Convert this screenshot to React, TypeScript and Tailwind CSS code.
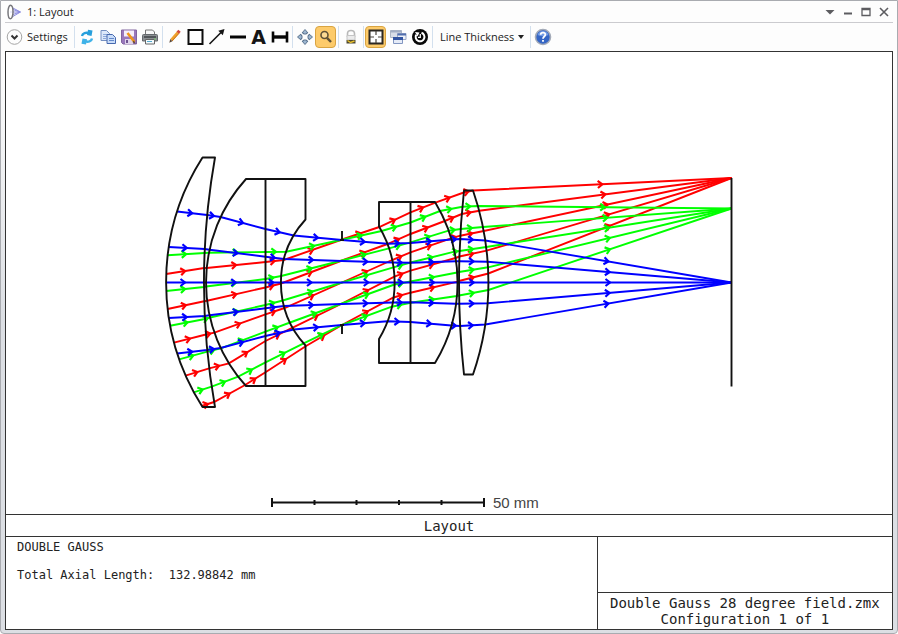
import type { ReactNode } from 'react';

type Surface = { x: number; r: number };

const AXIS = 282.5;

// vertex position and signed radius, r = 0 is a flat surface
const surfaces: Surface[] = [
  { x: 166, r: 232 },
  { x: 204, r: 716 },
  { x: 206, r: 154 },
  { x: 265.5, r: 0 },
  { x: 281, r: 93 },
  { x: 342, r: 0 },
  { x: 394.5, r: -109 },
  { x: 410.5, r: 0 },
  { x: 457.5, r: -155 },
  { x: 459, r: 853 },
  { x: 488.5, r: -282 },
  { x: 731.5, r: 0 },
];

// ray height at each surface
const fields = [
  {
    color: '#ff0000',
    rays: [
      [274, 268, 268, 262, 260, 239.5, 227, 212.3, 202.7, 192.5, 190.5, 178],
      [309, 301.3, 300.7, 287.5, 283.5, 260.5, 244, 234, 221, 214, 210.7, 178],
      [342.7, 334.5, 332.7, 314.3, 308, 282.5, 260, 252.3, 238.3, 235.7, 231, 178],
      [375.7, 368.3, 363.3, 341, 327.7, 303.5, 276.7, 270.7, 258, 256.5, 250.7, 178],
      [406, 402, 385, 372.3, 346, 325, 297.5, 292.7, 281.7, 281, 273.5, 178],
    ],
  },
  {
    color: '#00ff00',
    rays: [
      [255.3, 253, 252.7, 252, 251.7, 239.8, 231, 222.5, 211, 206.7, 206, 208.5],
      [291, 287, 286.5, 279, 276, 260.5, 248.3, 242.3, 230.7, 229, 227, 208.5],
      [325.7, 319, 317.5, 305, 300.5, 282.5, 267.3, 262.5, 251.7, 251, 247, 208.5],
      [359.3, 351.7, 348.3, 331.7, 322.5, 303.5, 284.5, 281.5, 272.5, 272, 267.3, 208.5],
      [392.3, 386.7, 376.7, 362.3, 343.3, 325, 306.7, 302.7, 296, 295.5, 290, 208.5],
    ],
  },
  {
    color: '#0000ff',
    rays: [
      [211.5, 215, 217, 229, 235.5, 240, 243.7, 243, 239.5, 239, 240.5, 282.5],
      [247, 249, 249.7, 256.7, 259, 261, 262.5, 262.7, 261.3, 261.2, 261.7, 282.5],
      [282.5, 282.5, 282.5, 282.5, 282.5, 282.5, 282.5, 282.5, 282.5, 282.5, 282.5, 282.5],
      [318, 316, 315.3, 308.3, 306, 304, 302.5, 302.3, 303.7, 303.8, 303.3, 282.5],
      [353.5, 350, 348, 336, 329.5, 325, 321.3, 322, 325.5, 326, 324.5, 282.5],
    ],
  },
];

const lenses = [
  'M202.5 157.5H215A716 716 0 0 0 215 407H202.5A232 232 0 0 1 202.5 157.5Z',
  'M246 179H305.5V219.5A93 93 0 0 0 305.5 345.5V386H246A154 154 0 0 1 246 179ZM265.5 179V386',
  'M379 202H435A155 155 0 0 1 435 363H379V339A109 109 0 0 0 379 226.5ZM410.5 202V363',
  'M464 190.5H473A282 282 0 0 1 473 374.5H464A853 853 0 0 1 464 190.5Z',
  'M342 231V240M340 240H344M342 334V325M340 325H344',
  'M731.5 178V386.5',
];

function hit(surface: Surface, y: number) {
  if (surface.r === 0) return surface.x;
  const h = y - AXIS;
  const sag = Math.abs(surface.r) - Math.sqrt(surface.r * surface.r - h * h);
  return surface.x + Math.sign(surface.r) * sag;
}

function Ray({ heights, color }: { heights: number[]; color: string }) {
  const points = heights.map((y, i) => [hit(surfaces[i], y), y]);
  let arrows = '';
  for (let i = 1; i < points.length; i++) {
    const dx = points[i][0] - points[i - 1][0];
    const dy = points[i][1] - points[i - 1][1];
    const len = Math.hypot(dx, dy);
    if (len < 5) continue;
    const ux = dx / len;
    const uy = dy / len;
    const mx = (points[i][0] + points[i - 1][0]) / 2;
    const my = (points[i][1] + points[i - 1][1]) / 2;
    const bx = mx - ux * 4.5;
    const by = my - uy * 4.5;
    arrows += `M${bx - uy * 3.5} ${by + ux * 3.5}L${mx} ${my}L${bx + uy * 3.5} ${by - ux * 3.5}`;
  }
  return (
    <g fill="none" stroke={color} strokeWidth="1.9">
      <polyline points={points.map((p) => p.join(',')).join(' ')} />
      <path d={arrows} strokeWidth="2.2" />
    </g>
  );
}

function LensDrawing() {
  return (
    <svg viewBox="6 52 886 462" className="block h-auto w-full" role="img" aria-label="Double Gauss lens layout">
      {fields.map((field) =>
        field.rays.map((heights, i) => <Ray key={field.color + i} heights={heights} color={field.color} />),
      )}
      <g fill="none" stroke="#111" strokeWidth="1.9" strokeLinejoin="round">
        {lenses.map((d) => (
          <path key={d} d={d} />
        ))}
        <path d="M272 502.5H484M272 498V507M484 498V507" strokeWidth="2" />
        <path d="M314.5 500V505M356.5 500V505M399 500V505M441.5 500V505" strokeWidth="2" />
      </g>
      <text x="493" y="508" fill="#444" fontSize="15" fontFamily="Liberation Sans, Arial, sans-serif">
        50 mm
      </text>
    </svg>
  );
}

function Icon({ children }: { children: ReactNode }) {
  return (
    <svg viewBox="0 0 18 18" className="h-[18px] w-[18px] shrink-0" fill="none" aria-hidden="true">
      {children}
    </svg>
  );
}

function ToolButton({ label, active, children }: { label: string; active?: boolean; children: ReactNode }) {
  return (
    <button
      type="button"
      aria-label={label}
      aria-pressed={active}
      className={
        active
          ? 'flex h-[22px] w-[21px] items-center justify-center rounded-sm border border-[#d9a441] bg-[#fdcb6b]'
          : 'flex h-[22px] w-[21px] items-center justify-center'
      }
    >
      {children}
    </button>
  );
}

function Separator() {
  return <div className="mr-px ml-0.5 h-[22px] w-px bg-[#d3e0ee]" />;
}

function WindowButton({ label, children }: { label: string; children: ReactNode }) {
  return (
    <button type="button" aria-label={label} className="flex h-5 w-[18px] items-center justify-center">
      <svg viewBox="0 0 10 10" className="h-2.5 w-2.5" fill="none" stroke="#5c5c60" aria-hidden="true">
        {children}
      </svg>
    </button>
  );
}

function TitleBar() {
  return (
    <header className="flex h-[22px] items-center border-b border-[#cbcbcf]">
      <svg viewBox="0 0 16 16" className="ml-0.5 h-4 w-4" fill="none" aria-hidden="true">
        <path d="M5 3.5L13.500 8L5 13M3 8H13.500M6 5.500L13 8L6 10.500" stroke="#8c8ce0" />
        <ellipse cx="3.500" cy="8" rx="2.500" ry="6.800" fill="#fff" fillOpacity=".7" stroke="#77777c" strokeWidth="1.500" />
      </svg>
      <h1 className="ml-1 flex-1 text-[11px] leading-5 text-[#222]">1: Layout</h1>
      <WindowButton label="Window menu">
        <path d="M0.500 3H9.500L5 7.500Z" fill="#5c5c60" stroke="none" />
      </WindowButton>
      <WindowButton label="Minimize">
        <path d="M1 6.500H9" strokeWidth="2" />
      </WindowButton>
      <WindowButton label="Maximize">
        <path d="M1 1.500H9V8.500H1ZM1 2.500H9" strokeWidth="1.300" />
      </WindowButton>
      <WindowButton label="Close">
        <path d="M1 1L9 9M9 1L1 9" strokeWidth="1.600" />
      </WindowButton>
    </header>
  );
}

function Toolbar() {
  return (
    <div role="toolbar" aria-label="Layout tools" className="flex h-7 items-center text-[11px] text-[#222]">
      <button type="button" className="flex h-[22px] w-[67px] items-center gap-[3px] pl-px">
        <Icon>
          <circle cx="8.500" cy="9" r="7.300" fill="#fdfdfd" stroke="#a5a5a5" />
          <path d="M5.500 7.500L8.500 10.500L11.500 7.500" stroke="#333" strokeWidth="2" />
        </Icon>
        Settings
      </button>
      <Separator />
      <ToolButton label="Refresh">
        <Icon>
          <path d="M4 8C4.500 5 8 4 11 5.200" stroke="#279fdc" strokeWidth="2.400" />
          <path d="M10 1.800L14.500 2.500L13.500 8L9 7Z" fill="#279fdc" />
          <path d="M14 10.500C13.500 13.500 10 14.500 7 13.200" stroke="#3fb2e8" strokeWidth="2.400" />
          <path d="M8 16.500L3.500 15.800L4.500 10.500L9 11.300Z" fill="#3fb2e8" />
        </Icon>
      </ToolButton>
      <ToolButton label="Copy">
        <Icon>
          <path d="M2 2.500H7.500L10.500 5.500V12.500H2Z" fill="#dce8fa" stroke="#7590c2" />
          <path d="M4 6.500H8M4 8.500H8M4 10.500H7" stroke="#8da9da" />
          <path d="M8 6.500H13.500L16.500 9.500V15.500H8Z" fill="#c9dcf8" stroke="#4668ae" />
          <path d="M10 10.500H15M10 12.500H15" stroke="#6489cb" />
        </Icon>
      </ToolButton>
      <ToolButton label="Save">
        <Icon>
          <path d="M1.500 2H16.500V16H3L1.500 14.500Z" fill="#9a78bd" stroke="#81659f" />
          <path d="M4 2.500H14V8.500H4Z" fill="#f5effb" />
          <path d="M5 11H13V16H5Z" fill="#dfd4ea" />
          <path d="M6 12H8V15H6Z" fill="#6f5490" />
          <path d="M7.500 5L14.500 14" stroke="#ef961b" strokeWidth="2.600" />
          <path d="M14 12.500L15.500 16L12.500 14Z" fill="#5b4630" />
        </Icon>
      </ToolButton>
      <ToolButton label="Print">
        <Icon>
          <path d="M4.500 7V2H11.500L13.500 4V7" fill="#f8f8f8" stroke="#777" />
          <path d="M1.500 7.500Q1.500 6.500 2.500 6.500H15.500Q16.500 6.500 16.500 7.500V13H1.500Z" fill="#8c9093" stroke="#666a6e" />
          <path d="M3 9H15" stroke="#3f4347" strokeWidth="1.500" />
          <path d="M4.500 11.500H13.500V16H4.500Z" fill="#f4fafd" stroke="#666" />
          <path d="M6 13.500H11" stroke="#55a9cc" />
          <path d="M13 11H15" stroke="#7bd06e" />
        </Icon>
      </ToolButton>
      <Separator />
      <ToolButton label="Pencil">
        <Icon>
          <path d="M5.500 12L12 4.500" stroke="#f0a12b" strokeWidth="3" />
          <path d="M6 13L13 5.300" stroke="#c7731d" />
          <path d="M11.800 4.800L13.500 2.800" stroke="#d1493e" strokeWidth="3.200" />
          <path d="M4.300 11L6.500 13.300L3.300 14.800Z" fill="#5b4a3a" />
        </Icon>
      </ToolButton>
      <ToolButton label="Rectangle">
        <Icon>
          <path d="M1.500 2H15.500V16H1.500Z" fill="#fff" stroke="#0c0c0c" strokeWidth="2" />
        </Icon>
      </ToolButton>
      <ToolButton label="Arrow">
        <Icon>
          <path d="M1.500 16L13 4.500" stroke="#151515" strokeWidth="1.600" />
          <path d="M16.500 1L14.800 7.300L10.300 2.800Z" fill="#151515" />
        </Icon>
      </ToolButton>
      <ToolButton label="Line">
        <Icon>
          <path d="M1 9H17" stroke="#050505" strokeWidth="3" />
        </Icon>
      </ToolButton>
      <ToolButton label="Text">
        <span className="font-['DejaVu_Sans'] text-[19px] leading-5 font-bold text-[#151515]">A</span>
      </ToolButton>
      <ToolButton label="Dimension">
        <Icon>
          <path d="M2 3.500V14.500M16 3.500V14.500" stroke="#050505" strokeWidth="2.600" />
          <path d="M2 9H16" stroke="#050505" strokeWidth="3.400" />
        </Icon>
      </ToolButton>
      <Separator />
      <ToolButton label="Pan">
        <Icon>
          <path
            d="M9 1.500L12 5H10.500V6H7.500V5H6ZM9 16.500L12 13H10.500V12H7.500V13H6ZM1.500 9L5 6V7.500H6V10.500H5V12ZM16.500 9L13 6V7.500H12V10.500H13V12Z"
            fill="#9db6d0"
            stroke="#5c7590"
          />
        </Icon>
      </ToolButton>
      <ToolButton label="Zoom" active>
        <Icon>
          <circle cx="7.500" cy="7" r="3.500" fill="#fbd993" stroke="#5f5136" strokeWidth="1.600" />
          <path d="M10 9.800L14 14" stroke="#5f5136" strokeWidth="2.400" />
        </Icon>
      </ToolButton>
      <Separator />
      <ToolButton label="Lock window">
        <Icon>
          <path d="M5.500 9V5.500C5.500 1.500 12.500 1.500 12.500 5.500V9" stroke="#b8b8b8" strokeWidth="1.600" />
          <path d="M5 7.500H13V12H5Z" fill="#ebebeb" stroke="#c4c4c4" />
          <path d="M4.500 12H13.500V15.500H4.500Z" fill="#4b4632" />
          <path d="M5.500 12.500L8.500 14.500L12.500 13" stroke="#e6bf2c" strokeWidth="1.500" />
        </Icon>
      </ToolButton>
      <Separator />
      <div className="flex gap-px">
        <ToolButton label="Fit to window" active>
          <Icon>
            <path d="M2.500 2.500H15.500V15.500H2.500Z" fill="#fff" stroke="#2d2822" strokeWidth="2" />
            <path d="M9 3V7M9 11V15M3 9H7M11 9H15" stroke="#4a443c" strokeWidth="1.200" />
          </Icon>
        </ToolButton>
        <ToolButton label="Windows">
          <Icon>
            <path d="M1.500 2.500H12.500V9.500H1.500Z" fill="#d9dee8" stroke="#aeb6c4" />
            <path d="M1.500 3.500H12.500" stroke="#a3aec4" strokeWidth="2" />
            <path d="M8.500 5.500H17V11.500H8.500Z" fill="#eef1f8" stroke="#9ca9c7" />
            <path d="M8.500 6.500H17" stroke="#526fae" strokeWidth="2" />
            <path d="M4.500 9.500H13.500V15.500H4.500Z" fill="#e5ebf7" stroke="#8296c1" />
            <path d="M4 10.500H14" stroke="#3355a2" strokeWidth="3" />
          </Icon>
        </ToolButton>
        <ToolButton label="Reset">
          <Icon>
            <circle cx="9" cy="9" r="8" fill="#080808" />
            <path d="M10.500 4.800A4.400 4.400 0 1 1 5.200 6.800" stroke="#fff" strokeWidth="2" />
            <path d="M4 4L8.500 4.500L6.500 8.500Z" fill="#fff" />
            <path d="M9.300 6V9.300H7" stroke="#fff" strokeWidth="1.200" />
          </Icon>
        </ToolButton>
      </div>
      <Separator />
      <button type="button" className="flex h-[22px] w-[94px] items-center gap-1 pl-1.5 whitespace-nowrap">
        Line Thickness
        <svg viewBox="0 0 6 4" className="h-1 w-1.5 shrink-0" aria-hidden="true">
          <path d="M0 0H6L3 4Z" fill="#222" />
        </svg>
      </button>
      <Separator />
      <ToolButton label="Help">
        <Icon>
          <circle cx="9" cy="9" r="7.500" fill="#3566c5" stroke="#a4abb8" strokeWidth="1.600" />
          <path d="M3.500 7A5.800 5.800 0 0 1 14.500 7Q9 9.500 3.500 7Z" fill="#729be4" />
          <path d="M6.600 6.800C6.800 3.800 11.500 4 11.300 6.800C11.200 8.500 9 8.600 9 10.800M9 12V13.800" stroke="#fff" strokeWidth="1.800" />
        </Icon>
      </ToolButton>
    </div>
  );
}

function InfoPanel() {
  return (
    <div className="font-['DejaVu_Sans_Mono',monospace] text-[#222]">
      <h2 className="flex h-[22px] items-center justify-center border-t border-[#333] text-[14px] leading-4">Layout</h2>
      <div className="grid grid-cols-[2fr_1fr] border-t border-[#333]">
        <div className="px-[11px] pt-[3px] text-[12px] leading-[14px] whitespace-pre">
          <p>DOUBLE GAUSS</p>
          <p className="mt-[14px]">{'Total Axial Length:  132.98842 mm'}</p>
        </div>
        <div className="border-l border-[#333]">
          <div className="h-[55px]" />
          <div className="border-t border-[#333] py-0.5 text-center text-[14px] leading-4 whitespace-nowrap">
            <p>Double Gauss 28 degree field.zmx</p>
            <p>Configuration 1 of 1</p>
          </div>
        </div>
      </div>
    </div>
  );
}

export default function App() {
  return (
    <div className="min-h-screen rounded-b-sm border border-[#a9abb0] bg-linear-to-b from-[#fdfdfd] from-10% to-[#dcdfe4] to-50% px-1 pb-[3px] font-['Open_Sans','Noto_Sans',sans-serif]">
      <TitleBar />
      <Toolbar />
      <main className="border border-[#333] bg-white">
        <LensDrawing />
        <InfoPanel />
      </main>
    </div>
  );
}
